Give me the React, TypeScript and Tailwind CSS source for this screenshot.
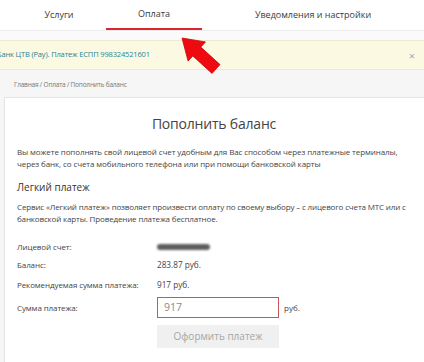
import React from "react";

function Arrow() {
  // red pointer over the "Оплата" tab
  return (
    <svg
      className="absolute left-0 top-0 pointer-events-none"
      width="424"
      height="362"
      viewBox="0 0 424 362"
    >
      <polygon
        points="182,38 205.5,41.9 200.8,47.1 220,64.6 212,73.4 192.8,55.9 188.1,61.1"
        fill="#ee0a0f"
        stroke="#c9060b"
        strokeWidth="0.8"
        strokeLinejoin="round"
      />
    </svg>
  );
}

function Row({ label, children, className }: { label: string; children: React.ReactNode; className?: string }) {
  return (
    <div className={"flex items-center " + (className || "")}>
      <div className="w-[140px] shrink-0 text-[8px] tracking-[-0.1px] text-[#444]">{label}</div>
      <div className="text-[8.2px] text-[#444]">{children}</div>
    </div>
  );
}

export default function App() {
  return (
    <div
      className="relative w-[424px] h-[362px] overflow-hidden bg-[#f6f6f6]"
      style={{ fontFamily: '"Open Sans", "Noto Sans", sans-serif' }}
    >
      {/* tabs */}
      <div className="flex h-[31px] bg-white border-b border-[#ececec] pl-[12px] text-[9px] text-[#3a3a3a]">
        <div className="w-[94px] flex items-center justify-center">Услуги</div>
        <div className="w-[96px] flex items-center justify-center border-b-2 border-[#d9262e]">Оплата</div>
        <div className="flex-1 flex items-center justify-center">Уведомления и настройки</div>
      </div>

      <div className="h-[9px] bg-[#fafafa]" />

      {/* notice */}
      <div className="flex h-[30px] items-center justify-between bg-[#fcf9e3] border-y border-[#efeacf] pr-[9px]">
        <span className="ml-[-3px] text-[7.5px] tracking-[-0.15px] text-[#1f8595]">Банк ЦТВ (Pay). Платеж ЕСПП 998324521601</span>
        <span className="text-[11px] leading-none text-[#a8a8a8]">×</span>
      </div>

      {/* breadcrumbs */}
      <div className="h-[27px] flex items-center pl-[14px] pt-[3px] text-[6.5px] tracking-[-0.2px] text-[#777]">
        Главная / Оплата / Пополнить баланс
      </div>

      {/* card */}
      <div className="ml-[4px] w-[440px] h-[280px] bg-white border border-[#e4e4e4] px-[12px] pt-[14px]">
        <h1 className="w-[394px] text-center text-[14px] tracking-[-0.2px] leading-[24px] text-[#444]">Пополнить баланс</h1>
        <p className="mt-[10px] w-[400px] text-[8px] tracking-[-0.1px] leading-[11.5px] text-[#444]">
          Вы можете пополнять свой лицевой счет удобным для Вас способом через платежные терминалы, через банк, со счета мобильного телефона или при помощи банковской карты
        </p>
        <h2 className="mt-[10px] text-[10px] leading-[16px] text-[#333]">Легкий платеж</h2>
        <p className="mt-[6px] w-[400px] text-[8px] tracking-[-0.15px] leading-[11.5px] text-[#444]">
          Сервис «Легкий платеж» позволяет произвести оплату по своему выбору – с лицевого счета МТС или с банковской карты. Проведение платежа бесплатное.
        </p>

        <Row label="Лицевой счет:" className="mt-[14px] h-[18px]">
          <span className="block w-[53px] h-[6px] rounded-full bg-[#5e5e5e] blur-[1px]" />
        </Row>
        <Row label="Баланс:" className="h-[18px]">283.87 руб.</Row>
        <Row label="Рекомендуемая сумма платежа:" className="mt-[2px] h-[18px]">917 руб.</Row>

        <div className="mt-[3px] flex items-center">
          <div className="w-[140px] shrink-0 text-[8px] tracking-[-0.1px] text-[#444]">Сумма платежа:</div>
          <div className="w-[122px] h-[21px] border border-[#c95561] flex items-center pl-[6px] text-[10.5px] text-[#8a8a8a]">917</div>
          <div className="ml-[5px] text-[8px] text-[#444]">руб.</div>
        </div>
        <div className="mt-[7px] ml-[140px] w-[122px] h-[23px] bg-[#f0f0f0] flex items-center justify-center text-[10px] text-[#a6a6a6]">
          Оформить платеж
        </div>
      </div>

      <Arrow />
    </div>
  );
}
